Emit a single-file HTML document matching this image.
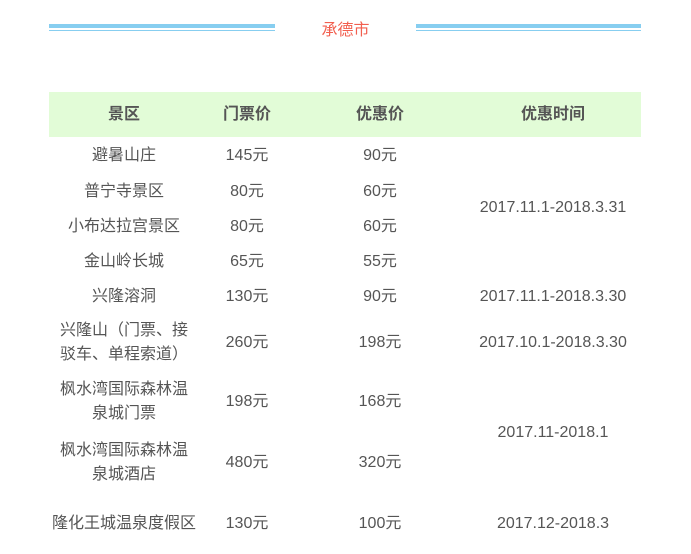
<!DOCTYPE html>
<html><head><meta charset="utf-8"><style>
body{margin:0;width:691px;height:518px;overflow:hidden;background:#fff;font-family:"Liberation Sans","Noto Sans CJK SC",sans-serif;color:#555;}
.l{position:absolute;height:4px;background:#87cef0;top:24px}
.t{position:absolute;height:1px;background:#87cef0;top:30px}
.title{position:absolute;left:275px;width:141px;top:20px;text-align:center;color:#f25f4f;font-size:16px;line-height:22px}
table{position:absolute;left:49px;top:92px;width:592px;border-collapse:collapse;font-size:16px}
td,th{text-align:center;padding:0;line-height:24px}
th{background:#e2fcd7;height:45px;font-weight:bold;color:#555}
</style></head><body>
<div class="l" style="left:49px;width:226px"></div><div class="t" style="left:49px;width:226px"></div>
<div class="l" style="left:416px;width:225px"></div><div class="t" style="left:416px;width:225px"></div>
<div class="title">承德市</div>
<table>
<colgroup><col style="width:150px"><col style="width:96px"><col style="width:170px"><col style="width:176px"></colgroup>
<tr><th>景区</th><th>门票价</th><th>优惠价</th><th>优惠时间</th></tr>
<tr style="height:37px"><td>避暑山庄</td><td>145元</td><td>90元</td><td rowspan="4">2017.11.1-2018.3.31</td></tr>
<tr style="height:35px"><td>普宁寺景区</td><td>80元</td><td>60元</td></tr>
<tr style="height:35px"><td>小布达拉宫景区</td><td>80元</td><td>60元</td></tr>
<tr style="height:35px"><td>金山岭长城</td><td>65元</td><td>55元</td></tr>
<tr style="height:35px"><td>兴隆溶洞</td><td>130元</td><td>90元</td><td>2017.11.1-2018.3.30</td></tr>
<tr style="height:58px"><td>兴隆山（门票、接<br>驳车、单程索道）</td><td>260元</td><td>198元</td><td>2017.10.1-2018.3.30</td></tr>
<tr style="height:60px"><td>枫水湾国际森林温<br>泉城门票</td><td>198元</td><td>168元</td><td rowspan="2">2017.11-2018.1</td></tr>
<tr style="height:62px"><td>枫水湾国际森林温<br>泉城酒店</td><td>480元</td><td>320元</td></tr>
<tr style="height:60px"><td>隆化王城温泉度假区</td><td>130元</td><td>100元</td><td>2017.12-2018.3</td></tr>
</table>
</body></html>
